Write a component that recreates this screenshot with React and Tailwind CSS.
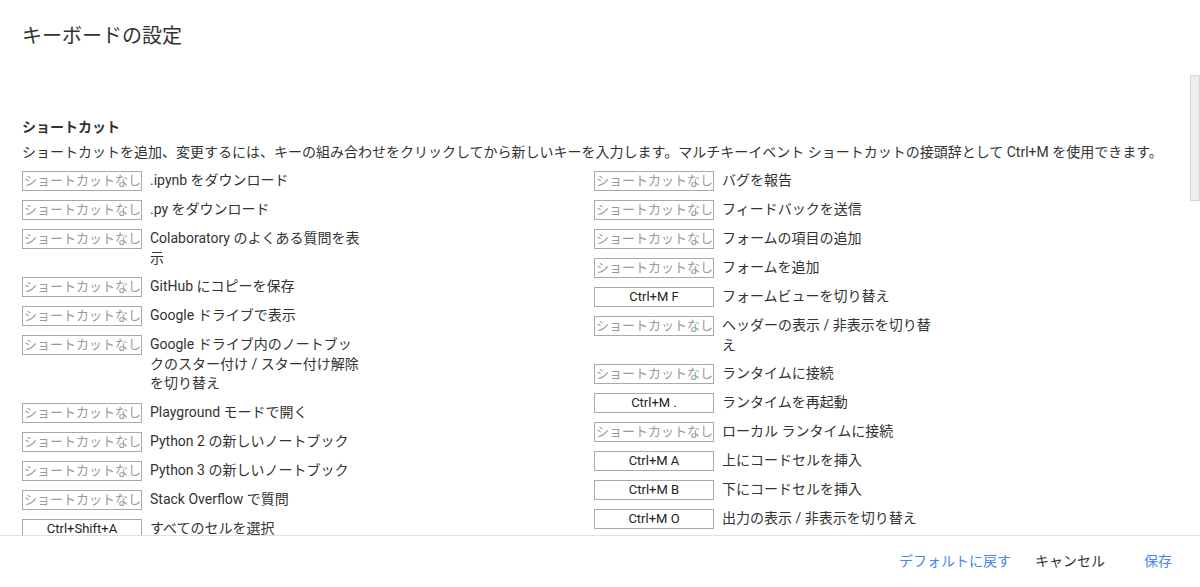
import React from 'react';

const NONE = 'ショートカットなし';

const left = [
  [null, '.ipynb をダウンロード'],
  [null, '.py をダウンロード'],
  [null, 'Colaboratory のよくある質問を表示'],
  [null, 'GitHub にコピーを保存'],
  [null, 'Google ドライブで表示'],
  [null, 'Google ドライブ内のノートブックのスター付け / スター付け解除を切り替え'],
  [null, 'Playground モードで開く'],
  [null, 'Python 2 の新しいノートブック'],
  [null, 'Python 3 の新しいノートブック'],
  [null, 'Stack Overflow で質問'],
  ['Ctrl+Shift+A', 'すべてのセルを選択'],
];

const right = [
  [null, 'バグを報告'],
  [null, 'フィードバックを送信'],
  [null, 'フォームの項目の追加'],
  [null, 'フォームを追加'],
  ['Ctrl+M F', 'フォームビューを切り替え'],
  [null, 'ヘッダーの表示 / 非表示を切り替え'],
  [null, 'ランタイムに接続'],
  ['Ctrl+M .', 'ランタイムを再起動'],
  [null, 'ローカル ランタイムに接続'],
  ['Ctrl+M A', '上にコードセルを挿入'],
  ['Ctrl+M B', '下にコードセルを挿入'],
  ['Ctrl+M O', '出力の表示 / 非表示を切り替え'],
];

const Row = ({ keys, label }) => (
  <div className="flex gap-[8px] mb-[9px]">
    <div
      className={
        'w-[120px] h-[20px] shrink-0 border border-[#a9a9a9] overflow-hidden whitespace-nowrap text-[13px] leading-[18px] ' +
        (keys ? 'text-center text-[#222]' : 'pl-[1px] text-[#9a9a9a]')
      }
    >
      {keys || NONE}
    </div>
    <div className="w-[214px] text-[14px] leading-[19.5px] text-[#333]">{label}</div>
  </div>
);

export default function App() {
  return (
    <div className="h-screen flex flex-col bg-white font-['Roboto','Noto_Sans_CJK_JP',sans-serif] text-[#212121]">
      {/* ヘッダー */}
      <div className="h-[73px] shrink-0 pl-[22px] pt-[22px]">
        <h1 className="text-[20px] leading-[28px] text-[#333]">キーボードの設定</h1>
      </div>

      {/* スクロール領域 */}
      <div className="flex-1 flex overflow-hidden">
        <div className="flex-1 pl-[22px] pt-[44px] overflow-hidden">
          <h2 className="text-[14px] leading-[20px] font-bold text-[#333]">ショートカット</h2>
          <p className="mt-[5px] text-[14px] leading-[20px] text-[#333] whitespace-nowrap">
            ショートカットを追加、変更するには、キーの組み合わせをクリックしてから新しいキーを入力します。マルチキーイベント ショートカットの接頭辞として Ctrl+M を使用できます。
          </p>
          <div className="mt-[9px] grid grid-cols-[572px_1fr]">
            <div>
              {left.map(([k, l], i) => <Row key={i} keys={k} label={l} />)}
            </div>
            <div>
              {right.map(([k, l], i) => <Row key={i} keys={k} label={l} />)}
            </div>
          </div>
        </div>
        <div className="w-[10px] shrink-0">
          <div className="mt-[2px] h-[126px] bg-[#eeeeee] border border-[#d6d6d6]" />
        </div>
      </div>

      {/* フッター */}
      <div className="h-[52px] shrink-0 border-t border-[#e0e0e0] flex items-center justify-end pr-[28px] text-[14px]">
        <button className="text-[#4a86e8]">デフォルトに戻す</button>
        <button className="ml-[24px] text-[#333]">キャンセル</button>
        <button className="ml-[39px] text-[#4a86e8]">保存</button>
      </div>
    </div>
  );
}
